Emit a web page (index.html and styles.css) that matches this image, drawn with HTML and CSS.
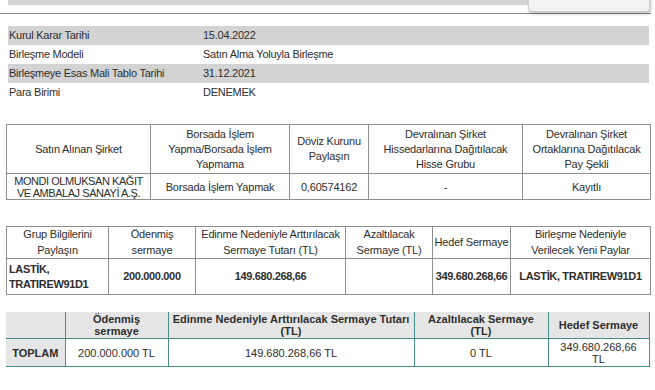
FILE: index.html
```html
<!DOCTYPE html>
<html lang="tr">
<head>
<meta charset="utf-8">
<link rel="stylesheet" href="styles.css">
</head>
<body>
<div class="page">
  <div class="topbar"><span class="topbar-title">Şirket</span></div>
  <div class="popup"></div>
  <div class="rule"></div>

  <table class="info">
    <colgroup><col class="info-key"><col></colgroup>
    <tr class="alt"><td>Kurul Karar Tarihi</td><td>15.04.2022</td></tr>
    <tr><td>Birleşme Modeli</td><td>Satın Alma Yoluyla Birleşme</td></tr>
    <tr class="alt"><td>Birleşmeye Esas Mali Tablo Tarihi</td><td>31.12.2021</td></tr>
    <tr><td>Para Birimi</td><td>DENEMEK</td></tr>
  </table>

  <table class="grid grid-company">
    <colgroup>
      <col style="width:144px"><col style="width:139px"><col style="width:79px"><col style="width:154px"><col style="width:128px">
    </colgroup>
    <tr class="head">
      <td>Satın Alınan Şirket</td>
      <td>Borsada İşlem Yapma/Borsada İşlem Yapmama</td>
      <td>Döviz Kurunu Paylaşın</td>
      <td>Devralınan Şirket Hissedarlarına Dağıtılacak Hisse Grubu</td>
      <td>Devralınan Şirket Ortaklarına Dağıtılacak Pay Şekli</td>
    </tr>
    <tr class="body">
      <td class="tight">MONDI OLMUKSAN KAĞIT VE AMBALAJ SANAYİ A.Ş.</td>
      <td>Borsada İşlem Yapmak</td>
      <td>0,60574162</td>
      <td>-</td>
      <td>Kayıtlı</td>
    </tr>
  </table>

  <table class="grid grid-group">
    <colgroup>
      <col style="width:102px"><col style="width:87px"><col style="width:150px"><col style="width:87px"><col style="width:78px"><col style="width:140px">
    </colgroup>
    <tr class="head">
      <td>Grup Bilgilerini Paylaşın</td>
      <td>Ödenmiş sermaye</td>
      <td>Edinme Nedeniyle Arttırılacak Sermaye Tutarı (TL)</td>
      <td>Azaltılacak Sermaye (TL)</td>
      <td class="nowrap">Hedef Sermaye</td>
      <td>Birleşme Nedeniyle Verilecek Yeni Paylar</td>
    </tr>
    <tr class="body">
      <td class="left">LASTİK, TRATIREW91D1</td>
      <td>200.000.000</td>
      <td>149.680.268,66</td>
      <td></td>
      <td>349.680.268,66</td>
      <td>LASTİK, TRATIREW91D1</td>
    </tr>
  </table>

  <table class="total">
    <colgroup>
      <col style="width:59px"><col style="width:103px"><col style="width:246px"><col style="width:134px"><col style="width:101px">
    </colgroup>
    <tr class="head">
      <th></th>
      <th>Ödenmiş sermaye</th>
      <th>Edinme Nedeniyle Arttırılacak Sermaye Tutarı (TL)</th>
      <th>Azaltılacak Sermaye (TL)</th>
      <th>Hedef Sermaye</th>
    </tr>
    <tr class="body">
      <th>TOPLAM</th>
      <td>200.000.000 TL</td>
      <td>149.680.268,66 TL</td>
      <td>0 TL</td>
      <td>349.680.268,66 TL</td>
    </tr>
  </table>
</div>
</body>
</html>
```

FILE: styles.css
```css
html, body {
  margin: 0;
  padding: 0;
  background: #ffffff;
}

body {
  font-family: "Liberation Sans", Arial, sans-serif;
  color: #2e2e2e;
}

.page {
  position: relative;
  width: 655px;
  height: 390px;
  overflow: hidden;
}

.topbar {
  margin: -15px 127px 0 8px;
  height: 20px;
  background: #d4d4d4;
  overflow: hidden;
}

.topbar-title {
  display: block;
  padding: 1px 0 0 3px;
  font-size: 12px;
  line-height: 13px;
  font-weight: bold;
  color: #333333;
}

.popup {
  position: absolute;
  top: -4px;
  left: 528px;
  width: 120px;
  height: 14px;
  background: #f2f2f2;
  border: 1px solid #cfcfcf;
  border-radius: 0 0 4px 4px;
  box-shadow: 1px 2px 3px rgba(0, 0, 0, 0.25);
}

.rule {
  margin-top: 8px;
  width: 651px;
  border-top: 1px solid #8a8a8a;
}

table {
  border-collapse: collapse;
  table-layout: fixed;
}

.info {
  margin: 12px 0 0 8px;
  width: 641px;
  font-size: 11px;
  letter-spacing: -0.25px;
}

.info-key {
  width: 194px;
}

.info td {
  height: 19px;
  padding: 0 0 0 1px;
  line-height: 13px;
  vertical-align: middle;
}

.info .alt td {
  background: #d3d3d3;
}

.grid {
  margin-left: 6px;
  width: 644px;
  font-size: 11px;
  letter-spacing: -0.2px;
  text-align: center;
}

.grid td {
  border: 1px solid #8f8f8f;
  padding: 0 2px;
  vertical-align: middle;
}

.grid td.tight {
  letter-spacing: -0.45px;
}

.grid td.nowrap {
  white-space: nowrap;
  padding: 0;
}

.grid-company {
  margin-top: 22px;
}

.grid-company .head td {
  height: 48px;
  line-height: 15px;
}

.grid-company .body td {
  height: 25px;
  line-height: 12px;
}

.grid-group {
  margin-top: 26px;
}

.grid-group .head td {
  height: 31px;
  line-height: 15.5px;
}

.grid-group .body td {
  height: 35px;
  line-height: 15px;
  font-weight: bold;
  letter-spacing: -0.35px;
}

.grid-group .body td.left {
  text-align: left;
}

.total {
  margin: 17px 0 0 6px;
  width: 643px;
  font-size: 11px;
  text-align: center;
}

.total th,
.total td {
  border-right: 1px solid #478d8d;
  border-bottom: 1px solid #478d8d;
  padding: 0 4px;
  vertical-align: middle;
  line-height: 12px;
}

.total th {
  font-weight: bold;
}

.total .head th {
  height: 26px;
  background: #e6e6e6;
}

.total .body th {
  background: #e6e6e6;
}

.total .body td,
.total .body th {
  height: 27px;
}

.total .body td {
  font-weight: normal;
}
```
